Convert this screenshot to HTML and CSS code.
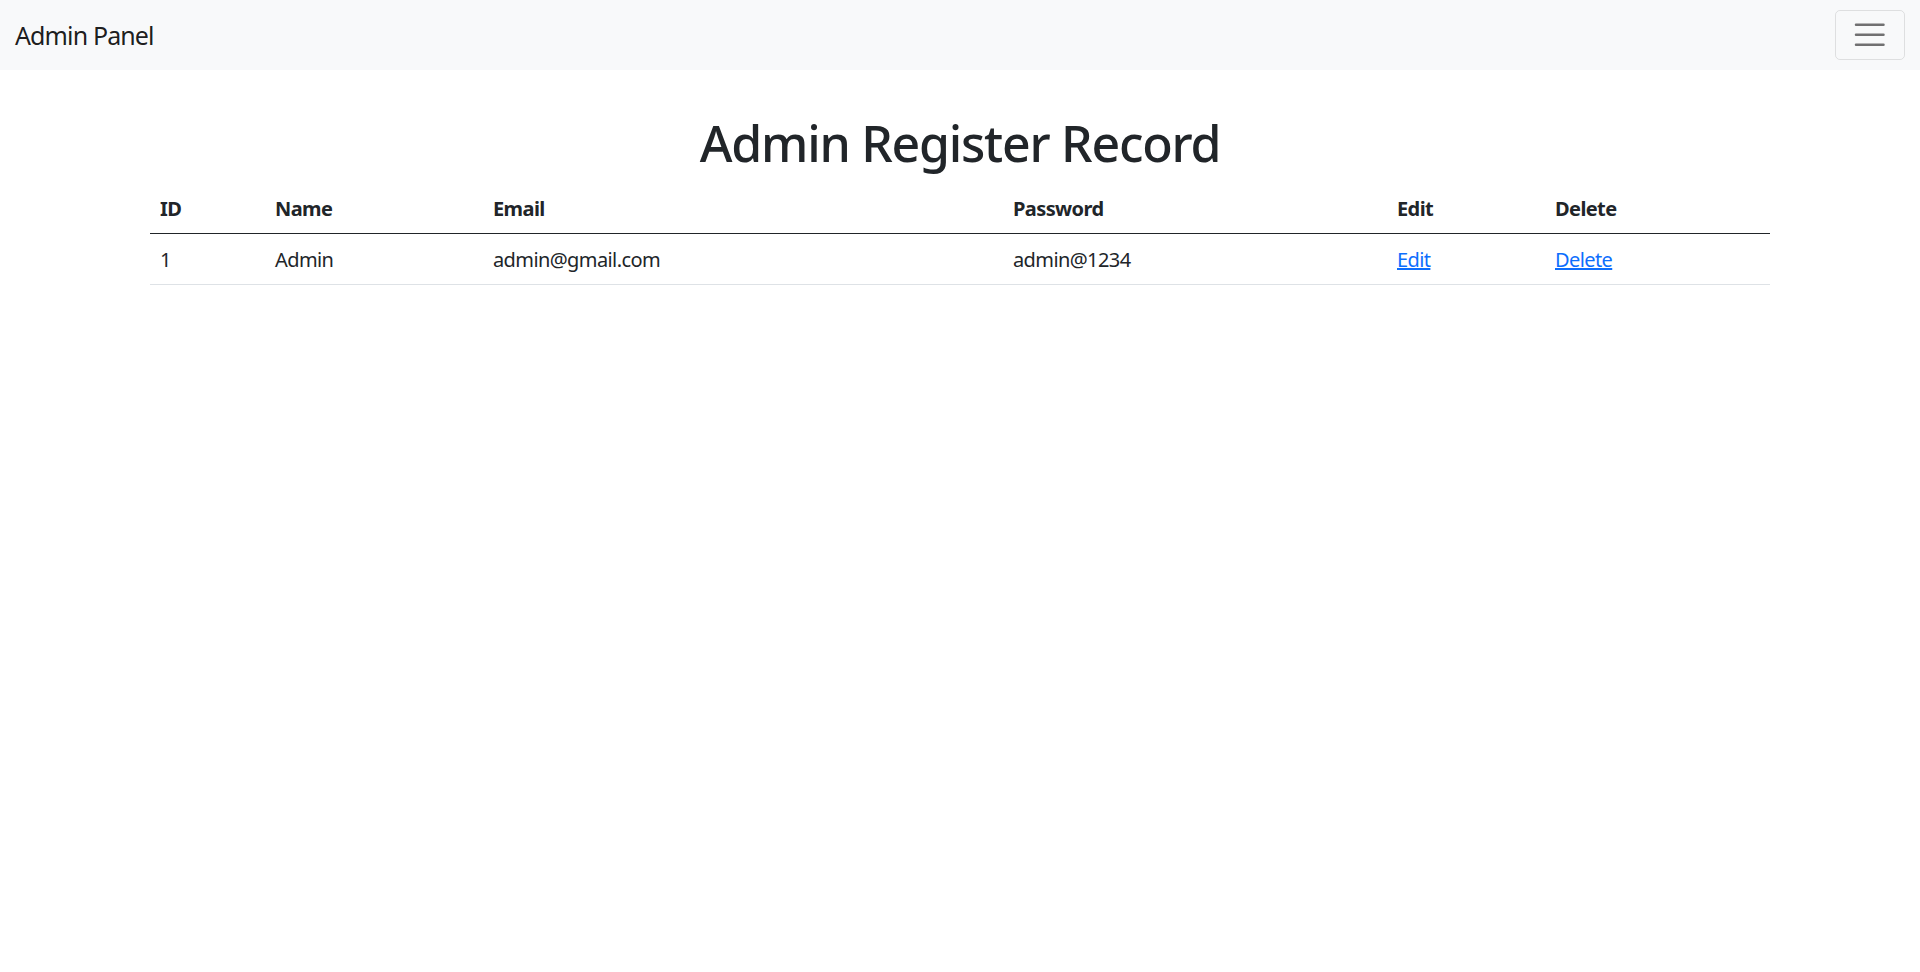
FILE: index.html
```html
<!DOCTYPE html>
<html lang="en">
<head>
<meta charset="utf-8">
<title>Admin Panel</title>
<link rel="stylesheet" href="styles.css">
</head>
<body>
<nav class="navbar">
  <a class="brand" href="#">Admin Panel</a>
  <button class="toggler" type="button" aria-label="Toggle navigation">
    <svg class="toggler-icon" viewBox="0 0 30 30" width="37.5" height="37.5">
      <path stroke="rgba(0,0,0,0.55)" stroke-linecap="round" stroke-miterlimit="10" stroke-width="2" d="M4 7h22M4 15h22M4 23h22"/>
    </svg>
  </button>
</nav>
<main class="container">
  <h1 class="title">Admin Register Record</h1>
  <table class="table">
    <colgroup>
      <col class="c-id"><col class="c-name"><col class="c-email"><col class="c-pass"><col class="c-edit"><col class="c-del">
    </colgroup>
    <thead>
      <tr><th>ID</th><th>Name</th><th>Email</th><th>Password</th><th>Edit</th><th>Delete</th></tr>
    </thead>
    <tbody>
      <tr><td>1</td><td>Admin</td><td>admin@gmail.com</td><td>admin@1234</td><td><a href="#">Edit</a></td><td><a href="#">Delete</a></td></tr>
    </tbody>
  </table>
</main>
</body>
</html>
```
FILE: styles.css
```css
html, body { margin: 0; padding: 0; }
body {
  font-family: "Noto Sans", "Open Sans", sans-serif;
  font-size: 20px;
  line-height: 1.5;
  letter-spacing: -0.03em;
  color: #212529;
  background: #fff;
}
.navbar {
  background: #f8f9fa;
  display: flex;
  align-items: center;
  justify-content: space-between;
  padding: 10px 15px;
}
.brand {
  font-size: 25px;
  line-height: 37.5px;
  padding: 7px 0 5.5px;
  letter-spacing: -0.035em;
  color: rgba(0,0,0,0.9);
  text-decoration: none;
}
.toggler {
  width: 70px;
  height: 50px;
  padding: 0;
  background: transparent;
  border: 1.25px solid rgba(0,0,0,0.1);
  border-radius: 5px;
  display: flex;
  align-items: center;
  justify-content: center;
}
.toggler-icon { display: block; }
.container {
  width: 1620px;
  margin: 0 auto;
}
.title {
  text-align: center;
  font-size: 50px;
  font-weight: 500;
  line-height: 1.2;
  letter-spacing: -0.025em;
  margin: 43px 0 10px;
}
.table {
  width: 100%;
  border-collapse: collapse;
}
.c-id { width: 115px; }
.c-name { width: 218px; }
.c-email { width: 520px; }
.c-pass { width: 384px; }
.c-edit { width: 158px; }
.c-del { width: 225px; }
.table th, .table td {
  padding: 11px 10px 9px;
  text-align: left;
}
.table th { font-weight: 700; border-bottom: 1.25px solid #212529; }
.table td { border-bottom: 1.25px solid #dee2e6; }
.table a { color: #0d6efd; }
```
